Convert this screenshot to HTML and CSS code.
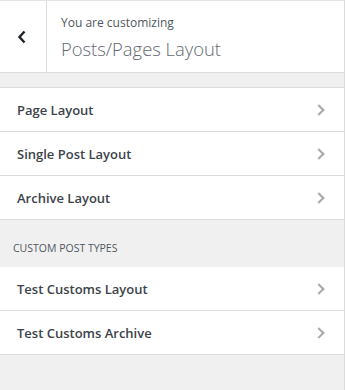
FILE: index.html
```html
<!DOCTYPE html>
<html lang="en">
<head>
    <meta charset="UTF-8">
    <title>Customizer - Posts/Pages Layout</title>
    <link rel="stylesheet" href="styles.css">
</head>
<body>
    <div class="panel">
        <div class="panel-header">
            <button class="back" type="button" aria-label="Back">
                <svg width="10" height="14" viewBox="0 0 10 14"><path d="M7.5 1.5 L2.5 7 L7.5 12.5" fill="none" stroke="#1d2327" stroke-width="2.4"/></svg>
            </button>
            <div class="title">
                <span class="action">You are customizing</span>
                <h3>Posts/Pages Layout</h3>
            </div>
        </div>

        <ul class="sections">
            <li class="section"><span>Page Layout</span><i class="chev"></i></li>
            <li class="section"><span>Single Post Layout</span><i class="chev"></i></li>
            <li class="section"><span>Archive Layout</span><i class="chev"></i></li>
        </ul>

        <h4 class="group-title">Custom Post Types</h4>

        <ul class="sections tight">
            <li class="section"><span>Test Customs Layout</span><i class="chev"></i></li>
            <li class="section"><span>Test Customs Archive</span><i class="chev"></i></li>
        </ul>
    </div>
</body>
</html>
```

FILE: styles.css
```css
* {
    margin: 0;
    padding: 0;
    box-sizing: border-box;
}

body {
    font-family: "Open Sans", "Noto Sans", sans-serif;
    background: #fff;
    color: #50575e;
}

.panel {
    width: 345px;
    height: 390px;
    background: #f0f0f1;
    border-right: 1px solid #dcdcde;
}

.panel-header {
    display: flex;
    height: 73px;
    background: #fff;
    border-top: 1px solid #e5e5e5;
    border-bottom: 1px solid #dcdcde;
}

.back {
    width: 47px;
    flex: none;
    border: none;
    border-right: 1px solid #dcdcde;
    background: #fff;
    display: flex;
    align-items: center;
    justify-content: center;
    padding-right: 3px;
}

.title {
    padding: 12px 0 0 14px;
}

.action {
    display: block;
    font-size: 12px;
    line-height: 20px;
    color: #50575e;
}

.title h3 {
    font-size: 18.4px;
    font-weight: 300;
    line-height: 32px;
    color: #646970;
}

.sections {
    list-style: none;
    margin-top: 14px;
    border-top: 1px solid #dcdcde;
}

.sections.tight {
    margin-top: 0;
    border-top: none;
}

.section {
    display: flex;
    align-items: center;
    justify-content: space-between;
    height: 44px;
    padding: 0 19px 0 17px;
    background: #fff;
    border-bottom: 1px solid #dcdcde;
    font-size: 13px;
    font-weight: 600;
    color: #3c434a;
}

.chev {
    width: 8px;
    height: 8px;
    border-right: 2px solid #a7aaad;
    border-top: 2px solid #a7aaad;
    transform: rotate(45deg);
    margin-right: 2px;
}

.group-title {
    font-size: 10.5px;
    font-weight: 400;
    text-transform: uppercase;
    color: #50575e;
    padding: 22px 13px 12px;
    line-height: 13px;
}
```
